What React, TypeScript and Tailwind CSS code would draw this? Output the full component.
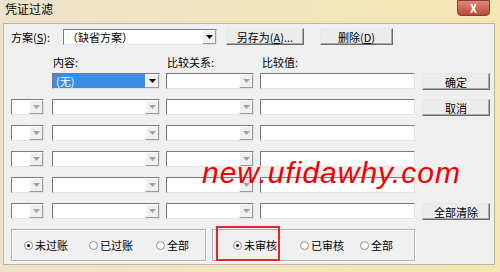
import React from 'react';

const font = "font-['Noto_Sans_CJK_SC','Liberation_Sans',sans-serif]";

function Arrow({ dark }: { dark?: boolean }) {
  return (
    <div className="flex h-full w-[14px] shrink-0 items-center justify-center border border-t-white border-l-white border-r-[#9a9a9a] border-b-[#9a9a9a] bg-[#f0f0f0]">
      <svg width="7" height="4" viewBox="0 0 7 4">
        <path d="M0 0h7L3.5 4z" fill={dark ? '#000' : '#a0a0a0'} />
      </svg>
    </div>
  );
}

function Combo({ className, text, selected, dark }: { className: string; text?: string; selected?: boolean; dark?: boolean }) {
  return (
    <div className={`flex h-[16px] shrink-0 border border-t-[#7a7a7a] border-l-[#7a7a7a] border-r-[#e3e3e3] border-b-[#e3e3e3] bg-white ${className}`}>
      <div className={`flex flex-1 items-center whitespace-nowrap px-[3px] text-[11px] leading-[14px] ${selected ? 'bg-[#3a8ee6] text-white' : 'text-black'}`}>
        {text}
      </div>
      <Arrow dark={dark} />
    </div>
  );
}

function Field({ className }: { className: string }) {
  return (
    <div className={`h-[16px] shrink-0 border border-t-[#7a7a7a] border-l-[#7a7a7a] border-r-[#e3e3e3] border-b-[#e3e3e3] bg-white ${className}`} />
  );
}

function Btn({ className, children }: { className: string; children: React.ReactNode }) {
  return (
    <div className={`flex h-[17px] shrink-0 items-center justify-center whitespace-nowrap border border-t-[#e8e8e8] border-l-[#e8e8e8] border-r-[#6a6a6a] border-b-[#6a6a6a] bg-[#ececec] text-[11px] leading-[14px] text-black shadow-[inset_-1px_-1px_0_#a8a8a8] ${className}`}>
      {children}
    </div>
  );
}

function Radio({ checked, label, className }: { checked?: boolean; label: string; className: string }) {
  return (
    <div className={`flex shrink-0 items-center gap-[2px] whitespace-nowrap text-[11px] leading-[14px] ${className}`}>
      <svg width="9" height="9" viewBox="0 0 9 9">
        <circle cx="4.5" cy="4.5" r="4" fill="#fff" stroke="#8a8a8a" />
        {checked && <circle cx="4.5" cy="4.5" r="1.6" fill="#111" />}
      </svg>
      <span>{label}</span>
    </div>
  );
}

const rows = [
  { first: true, button: '确定' },
  { button: '取消' },
  {},
  {},
  {},
  { button: '全部清除' },
] as { first?: boolean; button?: string }[];

export default function App() {
  return (
    <div className={`relative flex h-[272px] w-[500px] flex-col overflow-hidden bg-gradient-to-r from-[#ece3ca] to-[#f6e7b2] ${font}`}>
      {/* title bar */}
      <div className="relative flex h-[23px] shrink-0 items-start pl-[5px] pt-[2px] text-[12px] leading-[14px] text-black">
        凭证过滤
        <div className="absolute right-[10px] top-0 flex h-[16px] w-[33px] items-center justify-center rounded-b-[4px] border border-[#8b3b2f] bg-gradient-to-b from-[#d98b7c] to-[#b94a35] text-[11px] font-bold text-white">
          X
        </div>
      </div>

      {/* body */}
      <div className="mx-[3px] mr-[5px] flex h-[242px] flex-col border border-[#b9b39f] bg-[#f0f0f0] pl-[7px] text-black">
        <div className="mt-[4px] flex h-[17px] items-center">
          <span className="w-[52px] shrink-0 whitespace-nowrap text-[11px] leading-[14px]">
            方案(<u>S</u>):
          </span>
          <Combo className="w-[154px]" text="（缺省方案）" dark />
          <Btn className="ml-[9px] w-[78px]">
            另存为(<u>A</u>)...
          </Btn>
          <Btn className="ml-[16px] w-[73px]">
            删除(<u>D</u>)
          </Btn>
        </div>

        <div className="mt-[10px] flex h-[13px] items-center whitespace-nowrap text-[11px] leading-[14px]">
          <span className="ml-[42px] w-[114px]">内容:</span>
          <span className="w-[95px]">比较关系:</span>
          <span>比较值:</span>
        </div>

        <div className="mt-[5px] flex flex-col gap-[9px]">
          {rows.map((r, i) => (
            <div key={i} className="flex h-[17px] items-start">
              {r.first ? <div className="w-[33px] shrink-0" /> : <Combo className="w-[33px]" />}
              <Combo className="ml-[8px] w-[108px]" text={r.first ? '(无)' : ''} selected={r.first} dark={r.first} />
              <Combo className="ml-[6px] w-[88px]" />
              <Field className="ml-[6px] w-[155px]" />
              {r.button && <Btn className="ml-[7px] w-[68px]">{r.button}</Btn>}
            </div>
          ))}
        </div>

        <div className="mt-[9px] flex h-[32px]">
          <div className="flex h-full w-[195px] items-center border border-[#b0b0b0] shadow-[inset_1px_1px_0_#fff,1px_1px_0_#fff]">
            <Radio checked label="未过账" className="ml-[12px]" />
            <Radio label="已过账" className="ml-[21px]" />
            <Radio label="全部" className="ml-[23px]" />
          </div>
          <div className="ml-[6px] flex h-full w-[203px] items-center border border-[#b0b0b0] shadow-[inset_1px_1px_0_#fff,1px_1px_0_#fff]">
            <Radio checked label="未审核" className="ml-[20px]" />
            <Radio label="已审核" className="ml-[23px]" />
            <Radio label="全部" className="ml-[16px]" />
          </div>
        </div>
      </div>

      {/* annotation overlays */}
      <div className="pointer-events-none absolute left-[216px] top-[226px] h-[35px] w-[64px] border-2 border-[#e3262b]" />
      <div className="pointer-events-none absolute left-[202px] top-[158px] whitespace-nowrap font-['Liberation_Sans',sans-serif] text-[30px] italic leading-none tracking-[1px] text-[#f00000]">
        new.ufidawhy.com
      </div>
    </div>
  );
}
